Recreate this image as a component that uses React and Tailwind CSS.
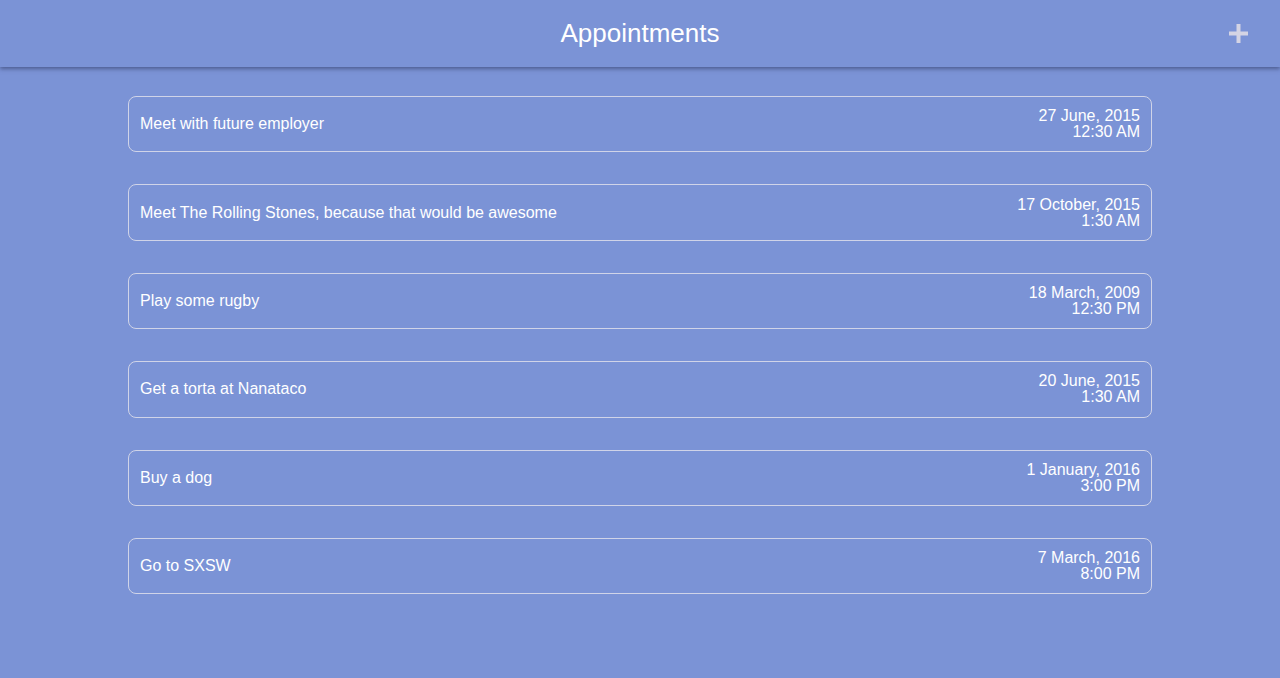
const appointments = [
  { title: 'Meet with future employer', date: '27 June, 2015', time: '12:30 AM' },
  { title: 'Meet The Rolling Stones, because that would be awesome', date: '17 October, 2015', time: '1:30 AM' },
  { title: 'Play some rugby', date: '18 March, 2009', time: '12:30 PM' },
  { title: 'Get a torta at Nanataco', date: '20 June, 2015', time: '1:30 AM' },
  { title: 'Buy a dog', date: '1 January, 2016', time: '3:00 PM' },
  { title: 'Go to SXSW', date: '7 March, 2016', time: '8:00 PM' },
];

export default function App() {
  return (
    <div className="min-h-screen bg-[#7b93d6] text-white font-['Liberation_Sans',Arial,sans-serif]">
      <header className="relative h-[67px] flex items-center justify-center bg-[#7b93d6] shadow-[0_2px_4px_rgba(40,50,90,0.55)]">
        <h1 className="text-[26px]">Appointments</h1>
        <button className="absolute right-[32px] top-[24px] w-[19px] h-[19px] text-[#d4d4e4]">
          <svg viewBox="0 0 19 19" width="19" height="19">
            <rect x="7.5" y="0" width="4" height="19" fill="currentColor" />
            <rect x="0" y="7.5" width="19" height="4" fill="currentColor" />
          </svg>
        </button>
      </header>
      <main className="flex flex-col items-center gap-[32px] pt-[29px]">
        {appointments.map((a) => (
          <div
            key={a.title}
            className="w-[1024px] h-[56.4px] flex items-center justify-between px-[11px] border border-[#d0d4e8] rounded-[8px]"
          >
            <span className="text-[16px]">{a.title}</span>
            <div className="text-right text-[16px] leading-[16px]">
              <div>{a.date}</div>
              <div>{a.time}</div>
            </div>
          </div>
        ))}
      </main>
    </div>
  );
}
